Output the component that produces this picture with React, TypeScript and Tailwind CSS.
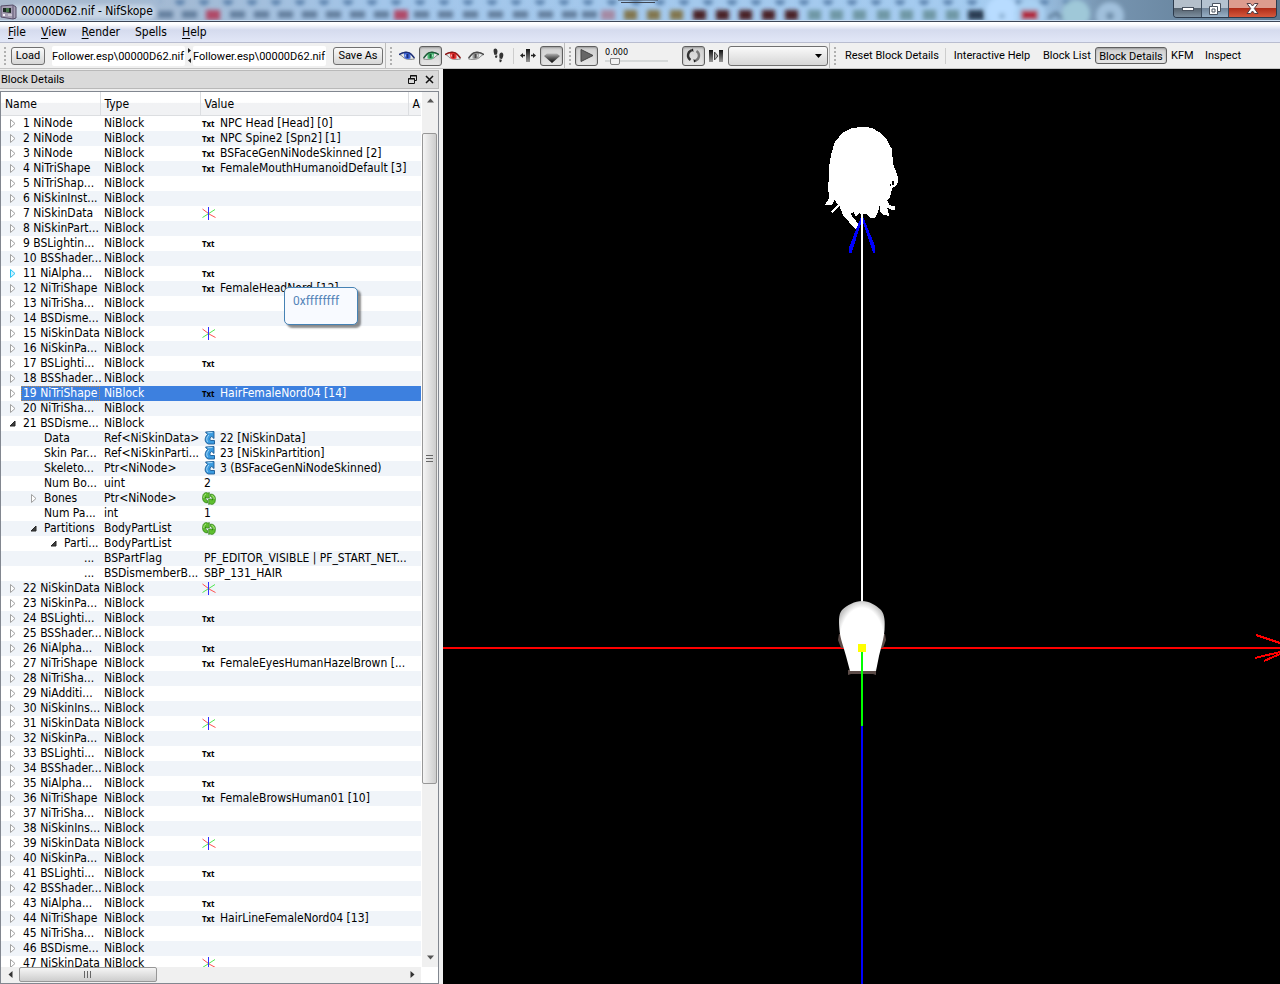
import React from 'react';

type ValueIcon = 'text' | 'axes' | 'link' | 'array';

interface TreeRow {
    name: string;
    type: string;
    level: number;
    state?: 'open' | 'closed' | 'hover';
    icon?: ValueIcon;
    value?: string;
    selected?: boolean;
}

const block = (name: string, icon?: ValueIcon, value?: string): TreeRow => ({
    name,
    type: 'NiBlock',
    level: 0,
    state: 'closed',
    icon,
    value
});

const rows: TreeRow[] = [
    block('1 NiNode', 'text', 'NPC Head [Head] [0]'),
    block('2 NiNode', 'text', 'NPC Spine2 [Spn2] [1]'),
    block('3 NiNode', 'text', 'BSFaceGenNiNodeSkinned [2]'),
    block('4 NiTriShape', 'text', 'FemaleMouthHumanoidDefault [3]'),
    block('5 NiTriShap...'),
    block('6 NiSkinInst...'),
    block('7 NiSkinData', 'axes'),
    block('8 NiSkinPart...'),
    block('9 BSLightin...', 'text'),
    block('10 BSShader...'),
    { ...block('11 NiAlpha...', 'text'), state: 'hover' },
    block('12 NiTriShape', 'text', 'FemaleHeadNord [12]'),
    block('13 NiTriSha...'),
    block('14 BSDisme...'),
    block('15 NiSkinData', 'axes'),
    block('16 NiSkinPa...'),
    block('17 BSLighti...', 'text'),
    block('18 BSShader...'),
    { ...block('19 NiTriShape', 'text', 'HairFemaleNord04 [14]'), selected: true },
    block('20 NiTriSha...'),
    { ...block('21 BSDisme...'), state: 'open' },
    { name: 'Data', type: 'Ref<NiSkinData>', level: 1, icon: 'link', value: '22 [NiSkinData]' },
    { name: 'Skin Par...', type: 'Ref<NiSkinParti...', level: 1, icon: 'link', value: '23 [NiSkinPartition]' },
    { name: 'Skeleto...', type: 'Ptr<NiNode>', level: 1, icon: 'link', value: '3 (BSFaceGenNiNodeSkinned)' },
    { name: 'Num Bo...', type: 'uint', level: 1, value: '2' },
    { name: 'Bones', type: 'Ptr<NiNode>', level: 1, state: 'closed', icon: 'array' },
    { name: 'Num Pa...', type: 'int', level: 1, value: '1' },
    { name: 'Partitions', type: 'BodyPartList', level: 1, state: 'open', icon: 'array' },
    { name: 'Parti...', type: 'BodyPartList', level: 2, state: 'open' },
    { name: '...', type: 'BSPartFlag', level: 3, value: 'PF_EDITOR_VISIBLE | PF_START_NET...' },
    { name: '...', type: 'BSDismemberB...', level: 3, value: 'SBP_131_HAIR' },
    block('22 NiSkinData', 'axes'),
    block('23 NiSkinPa...'),
    block('24 BSLighti...', 'text'),
    block('25 BSShader...'),
    block('26 NiAlpha...', 'text'),
    block('27 NiTriShape', 'text', 'FemaleEyesHumanHazelBrown [...'),
    block('28 NiTriSha...'),
    block('29 NiAdditi...'),
    block('30 NiSkinIns...'),
    block('31 NiSkinData', 'axes'),
    block('32 NiSkinPa...'),
    block('33 BSLighti...', 'text'),
    block('34 BSShader...'),
    block('35 NiAlpha...', 'text'),
    block('36 NiTriShape', 'text', 'FemaleBrowsHuman01 [10]'),
    block('37 NiTriSha...'),
    block('38 NiSkinIns...'),
    block('39 NiSkinData', 'axes'),
    block('40 NiSkinPa...'),
    block('41 BSLighti...', 'text'),
    block('42 BSShader...'),
    block('43 NiAlpha...', 'text'),
    block('44 NiTriShape', 'text', 'HairLineFemaleNord04 [13]'),
    block('45 NiTriSha...'),
    block('46 BSDisme...'),
    block('47 NiSkinData', 'axes')
];

const indents = ['pl-[5px]', 'pl-[26px]', 'pl-[46px]', 'pl-[66px]'];

const pressed = 'border border-[#5f5f5f] rounded-[3px] bg-linear-to-b from-[#cfcfcf] to-[#e6e6e6] shadow-[inset_0_1px_2px_#9a9a9a]';
const raised = 'border border-[#707070] rounded-[3px] bg-linear-to-b from-[#fafafa] to-[#d6d6d6]';

/* Title bar */

// x, width, colour of the blurred things behind the glass
const glassSpots: [number, number, string][] = [
    [206, 14, '#b04a68'],
    [394, 14, '#b04a68'],
    [601, 14, '#a58aa4'],
    [624, 13, '#82774f'],
    [647, 13, '#82774f'],
    [670, 13, '#82774f'],
    [693, 13, '#4a2028'],
    [716, 13, '#4a2028'],
    [739, 13, '#4a2028'],
    [762, 13, '#4a2028'],
    [785, 13, '#4a2028'],
    [808, 13, '#6f98a6'],
    [830, 13, '#6f98a6'],
    [853, 13, '#6f98a6'],
    [877, 13, '#6f98a6'],
    [900, 13, '#6f98a6'],
    [923, 13, '#6f98a6'],
    [946, 13, '#6f98a6'],
    [968, 16, '#2b3d52']
];

const glassDashes = [158, 182, 230, 254, 278, 302, 326, 350, 374, 414, 438, 463, 488, 513, 538, 562, 582];

const TitleBar: React.FC = () => (
    <header className="relative h-[22px] shrink-0 overflow-hidden border-b border-[#3c4656] bg-[#9fc0e0]">
        <svg className="absolute inset-0 h-full w-full" viewBox="0 0 1280 21" preserveAspectRatio="none">
            <defs>
                <filter id="glass" x="-5%" y="-50%" width="110%" height="200%">
                    <feGaussianBlur stdDeviation="2.2" />
                </filter>
                <pattern id="dots" width="24" height="12" patternUnits="userSpaceOnUse">
                    <ellipse cx="12" cy="1" rx="5" ry="4" fill="#547da8" />
                </pattern>
                <linearGradient id="glassBase">
                    <stop offset="0" stopColor="#a9b8cc" />
                    <stop offset="0.14" stopColor="#a3bad4" />
                    <stop offset="0.3" stopColor="#a3c6ea" />
                    <stop offset="0.8" stopColor="#a5ccf0" />
                    <stop offset="0.86" stopColor="#7795b1" />
                    <stop offset="1" stopColor="#5c7890" />
                </linearGradient>
            </defs>
            <rect width="1280" height="21" fill="url(#glassBase)" />
            <g filter="url(#glass)">
                <rect x="160" width="920" height="7" fill="url(#dots)" />
                {glassDashes.map((x) => (
                    <rect key={x} x={x} y="11" width="15" height="7" fill="#647f9e" />
                ))}
                {glassSpots.map(([x, width, fill]) => (
                    <rect key={x} x={x} y="10" width={width} height="10" fill={fill} />
                ))}
                <circle cx="1002" cy="12" r="16" fill="#b8dcff" />
                <circle cx="1002" cy="16" r="3" fill="#8fb2d4" />
                <circle cx="1030" cy="14" r="15" fill="#a9d0f2" />
                <circle cx="1076" cy="14" r="14" fill="#9fc8d8" />
                <circle cx="1110" cy="16" r="14" fill="#a0c0dc" />
                <circle cx="1110" cy="16" r="4" fill="#6f8fab" />
                <path d="M1048 18l8-5 6 5" stroke="#5a7894" strokeWidth="3" fill="none" />
                <rect x="1021" y="10" width="17" height="10" fill="#b02a40" />
                <rect x="10" y="5" width="145" height="14" rx="6" fill="#dbe6f2" fillOpacity="0.65" />
            </g>
            <path d="M618 0h40M621 2.500h34" stroke="#3f4652" strokeWidth="1" />
            <path d="M0 20.500h1280" stroke="#c9dcee" />
        </svg>
        <div className="relative flex h-full items-center justify-between">
            <div className="flex items-center gap-1">
                <svg width="17" height="18" viewBox="0 0 17 18">
                    <path d="M1 4l12-1 3 2v11l-3 1-12-2z" fill="#a69fb4" stroke="#544c66" />
                    <path d="M13 3v14" stroke="#5d5470" />
                    <path d="M3 6h8v5l-8-1z" fill="#1d2a25" />
                    <path d="M6 6h3v4h-3z" fill="#47774b" />
                    <path d="M3 12h2v2h-2z" fill="#f4f2f8" />
                    <path d="M8 13h4" stroke="#eee" />
                </svg>
                <h1 className="text-[12px] text-black">00000D62.nif - NifSkope</h1>
            </div>
            <div className="mr-[3px] flex h-[18px] self-start overflow-hidden rounded-b-[4px] border border-t-0 border-[#2c3a4c]">
                <button aria-label="Minimize" className="flex w-7 items-center justify-center border-r border-[#3d4c5e] bg-linear-to-b from-[#b4bfca] from-45% via-[#56636f] via-50% to-[#7d8f9f]">
                    <svg width="12" height="6" viewBox="0 0 12 6"><rect x="0.5" y="1.5" width="11" height="3" fill="#fff" stroke="#49525f" /></svg>
                </button>
                <button aria-label="Restore" className="flex w-[27px] items-center justify-center border-r border-[#3d4c5e] bg-linear-to-b from-[#b4c2d0] from-45% via-[#71859a] via-50% to-[#98b0c6]">
                    <svg width="12" height="12" viewBox="0 0 12 12">
                        <path d="M3.5 0.5h8v8h-3v3h-8v-8h3z" fill="#fff" stroke="#49525f" />
                        <path d="M3.5 3.5h5v5M3 6h3v3h-3z" fill="none" stroke="#49525f" />
                    </svg>
                </button>
                <button aria-label="Close" className="flex w-[47px] items-center justify-center bg-linear-to-b from-[#dd9c8e] from-45% via-[#b02c18] via-50% to-[#d5583c]">
                    <svg width="13" height="11" viewBox="0 0 13 11">
                        <path d="M1 0.5h3.5l2 2.5 2-2.5h3.5l-3.7 5 3.7 5h-3.5l-2-2.5-2 2.5h-3.5l3.7-5z" fill="#fff" stroke="#4f3d44" />
                    </svg>
                </button>
            </div>
        </div>
    </header>
);

const menus = [
    { key: 'F', rest: 'ile' },
    { key: 'V', rest: 'iew' },
    { key: 'R', rest: 'ender' },
    { key: '', rest: 'Spells' },
    { key: 'H', rest: 'elp' }
];

const MenuBar: React.FC = () => (
    <nav className="flex h-[21px] shrink-0 items-center gap-[15px] border-b border-[#b9bdd0] bg-linear-to-b from-white from-10% via-[#d5dbee] via-40% to-[#e2e7f7] pl-2 text-[12px]">
        {menus.map((menu) => (
            <button key={menu.rest}>
                <span className="underline underline-offset-2">{menu.key}</span>
                {menu.rest}
            </button>
        ))}
    </nav>
);

/* Toolbar */

const Grip: React.FC = () => (
    <svg className="shrink-0" width="3" height="19" viewBox="0 0 3 19">
        <path d="M1 1v18" stroke="#b0b0b0" strokeWidth="2" strokeDasharray="2 2" />
    </svg>
);

const Eye: React.FC<{ color: string; dark: string; flip?: boolean }> = ({ color, dark, flip }) => (
    <svg width="16" height="10" viewBox="0 0 16 10" className={flip ? '-scale-x-100' : undefined}>
        <path d="M0.500 3.500C4 0.500 10 0.500 12.500 4L15.500 8C11 9 5 8.500 3 5z" fill="#e4e8e8" stroke="#777" strokeWidth="0.800" />
        <path d="M5 2h6.500v5.500L8 8.300 5.500 7z" fill={color} />
        <path d="M8.500 3v4" stroke={dark} strokeWidth="1.800" />
        <path d="M6.500 3.500v2" stroke="#fff" strokeOpacity="0.600" />
        <path d="M0 3.700C4 0.800 10 0 12.500 3.500L15.500 7" fill="none" stroke={dark} strokeWidth="1.400" />
    </svg>
);

const ToolBar: React.FC = () => (
    <div className="flex h-[26px] shrink-0 items-stretch overflow-hidden border-b border-[#c4c4c4] bg-[#f0f0f0] font-[Roboto,sans-serif] text-[11px] whitespace-nowrap">
        <div className="flex w-[386px] shrink-0 items-center border-r border-[#bdbdbd] pl-1">
            <Grip />
            <button className={`ml-1 h-[18px] w-[34px] ${raised}`}>Load</button>
            <input aria-label="Load file" className="ml-[7px] h-5 w-[133px] rounded-[2px] bg-white pt-0.5" defaultValue="Follower.esp\00000D62.nif" />
            <svg className="ml-0.5 shrink-0" width="5" height="15" viewBox="0 0 5 15">
                <path d="M1 0l3 2.500-3 2.500zM4 10v5l-3-2.500z" fill="#222" />
            </svg>
            <input aria-label="Save file" className="ml-px h-5 w-[133px] rounded-[2px] bg-white pt-0.5" defaultValue="Follower.esp\00000D62.nif" />
            <button className={`ml-[7px] h-[18px] w-[50px] ${raised}`}>Save As</button>
        </div>

        <div className="flex w-[179px] shrink-0 items-center border-r border-[#bdbdbd] pl-1">
            <Grip />
            <button aria-label="View top" className="ml-1.5"><Eye color="#3c64d8" dark="#1c2f78" /></button>
            <button aria-label="View front" className={`ml-1 flex h-5 w-[23px] items-center justify-center ${pressed}`}>
                <Eye color="#45b870" dark="#1d5a38" flip />
            </button>
            <button aria-label="View side" className="ml-[3px]"><Eye color="#ec3030" dark="#8f1616" /></button>
            <button aria-label="View user" className="ml-[7px]"><Eye color="#999" dark="#4a4a4a" flip /></button>
            <button aria-label="Walk" className="ml-[9px]">
                <svg width="11" height="15" viewBox="0 0 11 15" fill="#333">
                    <path d="M1 1c1.500-1.500 3.500 0 3.500 2.500L4 6.500 1.500 7C1 5 0 2.500 1 1zM2 7.700l2.200-.4c.3 1.500 0 2.500-1 2.600s-1.200-1-1.200-2.200zM10 5.500C9 3.500 6.500 4.500 6.300 7l.2 3.500 2.500.5C10 9 10.800 7 10 5.500zM6.500 11.300l2.300.5c0 1.500-.6 2.600-1.500 2.500s-1-1.500-.8-3z" />
                </svg>
            </button>
            <div className="ml-[9px] h-4 w-px bg-[#cdcdcd]" />
            <button aria-label="Flip" className="ml-1.5">
                <svg width="16" height="13" viewBox="0 0 16 13">
                    <defs>
                        <linearGradient id="bar" x2="0" y2="1"><stop stopColor="#111" /><stop offset="1" stopColor="#999" /></linearGradient>
                    </defs>
                    <rect x="6" width="4" height="13" fill="url(#bar)" />
                    <path d="M0 6.500l3-2.500v1.800h2v1.400H3V9zM16 6.500L13 4v1.800h-2v1.400h2V9z" fill="#222" />
                </svg>
            </button>
            <button aria-label="Perspective" className={`ml-1 flex h-5 w-[23px] items-center justify-center pt-1 ${pressed}`}>
                <svg width="16" height="11" viewBox="0 0 16 11">
                    <defs>
                        <linearGradient id="plane" x2="0" y2="1"><stop stopColor="#b5b5b5" /><stop offset="0.400" stopColor="#666" /><stop offset="1" stopColor="#050505" /></linearGradient>
                    </defs>
                    <path d="M0 4l3-2.500h10l3 2.500-8 7z" fill="url(#plane)" />
                </svg>
            </button>
        </div>

        <div className="flex w-[265px] shrink-0 items-center border-r border-[#bdbdbd] pl-1">
            <Grip />
            <button aria-label="Play" className={`ml-[3px] flex h-5 w-[23px] items-center justify-center ${pressed}`}>
                <svg width="14" height="13" viewBox="0 0 14 13"><path d="M1 0.500l12 6-12 6z" fill="#666" stroke="#444" /></svg>
            </button>
            <label className="ml-[7px] flex h-full w-[63px] flex-col pt-1 font-['DejaVu_Sans_Condensed',sans-serif] text-[9px] leading-[10px]">
                0.000
                <input
                    type="range"
                    min="0"
                    max="100"
                    defaultValue="10"
                    className="h-2 w-full appearance-none bg-linear-to-b from-transparent from-35% via-[#c3c8c8] via-50% to-transparent to-65% [&::-webkit-slider-thumb]:h-[7px] [&::-webkit-slider-thumb]:w-[10px] [&::-webkit-slider-thumb]:appearance-none [&::-webkit-slider-thumb]:rounded-b-[2px] [&::-webkit-slider-thumb]:border [&::-webkit-slider-thumb]:border-[#858585] [&::-webkit-slider-thumb]:bg-[#f2f2f2]"
                />
            </label>
            <button aria-label="Loop" className={`ml-[14px] flex h-5 w-[23px] items-center justify-center ${pressed}`}>
                <svg width="15" height="15" viewBox="0 0 15 15" fill="none" stroke="#333" strokeWidth="2.400">
                    <path d="M5.500 2.400A5.400 5.400 0 0 0 4.500 12" />
                    <path d="M9.500 12.600A5.400 5.400 0 0 0 10.500 3" stroke="#777" />
                    <path d="M7 0.500L7.500 4 4.500 2zM8 14.500L7.500 11l3 2z" fill="#222" stroke="none" />
                </svg>
            </button>
            <button aria-label="Next sequence" className="ml-1">
                <svg width="14" height="12" viewBox="0 0 14 12">
                    <path d="M0 0h4v12H0zM10 0h4v12h-4z" fill="url(#bar)" />
                    <path d="M5.500 2l3.500 4-3.500 4z" fill="#aaa" stroke="#444" />
                </svg>
            </button>
            <div className="relative ml-[5px] flex items-center">
                <select aria-label="Animation" className={`h-5 w-[100px] appearance-none ${raised}`} />
                <svg className="pointer-events-none absolute right-1.5" width="7" height="4" viewBox="0 0 7 4"><path d="M0 0h7L3.500 4z" /></svg>
            </div>
        </div>

        <div className="flex grow items-center pl-1">
            <Grip />
            <button className="ml-2 w-[92px] pt-0.5">Reset Block Details</button>
            <div className="ml-[8px] h-4 w-px bg-[#cdcdcd]" />
            <button className="ml-[7px] w-[78px] pt-0.5">Interactive Help</button>
            <button className="ml-3 w-[44px] pt-0.5">Block List</button>
            <button className={`ml-2 h-[17px] w-[72px] pt-px ${pressed}`}>Block Details</button>
            <button className="ml-1 w-[22px] pt-0.5">KFM</button>
            <button className="ml-[11px] w-[38px] pt-0.5">Inspect</button>
        </div>
    </div>
);

/* Block tree */

const Expander: React.FC<{ state?: TreeRow['state'] }> = ({ state }) => {
    if (!state) return <span className="w-[13px] shrink-0" />;

    return (
        <button aria-label="Toggle branch" className="flex w-[13px] shrink-0 items-center justify-center">
            <svg width="9" height="9" viewBox="0 0 9 9">
                {state === 'open' ? (
                    <path d="M7 2v5H2z" fill="#404040" stroke="#262626" strokeLinejoin="round" />
                ) : (
                    <path
                        d="M2.500 0.500v8l4.500-4z"
                        fill={state === 'hover' ? '#cdf1fd' : '#fff'}
                        stroke={state === 'hover' ? '#27c4f5' : '#a0a0a0'}
                    />
                )}
            </svg>
        </button>
    );
};

const RowIcon: React.FC<{ icon: ValueIcon }> = ({ icon }) => {
    switch (icon) {
        case 'text':
            return <span className="w-[18px] shrink-0 font-['Noto_Sans',sans-serif] text-[8px] leading-[13px] font-bold text-black">Txt</span>;
        case 'axes':
            return (
                <svg className="shrink-0" width="14" height="15" viewBox="0 0 14 15" fill="none">
                    <path d="M0.500 3l6 4.500M13.500 11.500L7 8" stroke="#ff5050" />
                    <path d="M0.500 11.500L13 3.500" stroke="#50e850" />
                    <path d="M6.500 1v13" stroke="#3030ff" />
                </svg>
            );
        case 'link':
            return (
                <svg className="mr-1 ml-0.5 shrink-0" width="12" height="14" viewBox="0 0 12 14">
                    <path d="M1.500 1L10 0.500V7.500L7.800 5.500C6 6 5.500 8 6.500 9.500H10.500V13H4.500C0.500 12 0 7 3.500 3.500z" fill="#3b9be0" stroke="#1b5a94" strokeWidth="0.900" />
                    <path d="M3.500 1.800l5-.3M5 4C2.500 6.500 2 9 4 11" fill="none" stroke="#a9dcfa" />
                </svg>
            );
        default:
            return (
                <svg className="shrink-0" width="14" height="13" viewBox="0 0 14 13">
                    <path d="M2 1.500C3.500 0.200 5 0.500 6 1.200L7.300 0.500V6H3L4 4.700C3 5 3 6.800 4 7.500L5.500 8.500V11C2.500 11 0.500 9 0.600 6S1.200 2.200 2 1.500z" fill="#5fbf30" stroke="#2c7c14" strokeWidth="0.700" />
                    <path d="M12 11.500C10.500 12.800 9 12.500 8 11.800L6.700 12.500V7H11L10 8.300C11 8 11 6.200 10 5.500L8.500 4.500V2C11.500 2 13.500 4 13.400 7S12.800 10.800 12 11.500z" fill="#5fbf30" stroke="#2c7c14" strokeWidth="0.700" />
                    <path d="M1.800 6C1.800 4 2.500 2.500 4 2M9.500 3.300C11.500 4 12.300 5.500 12.200 7" stroke="#b6eb8e" fill="none" strokeWidth="0.900" />
                </svg>
            );
    }
};

const scrollThumb = 'flex items-center justify-center rounded-[2px] border border-[#979797]';

const BlockTree: React.FC = () => (
    <div className="flex min-h-0 grow flex-col border border-[#828790] bg-white">
        <div className="flex min-h-0 grow">
            <div className="mr-px h-full min-w-0 grow overflow-hidden">
                <table className="w-full table-fixed border-collapse text-left font-['DejaVu_Sans_Condensed','DejaVu_Sans',sans-serif] text-[12px] whitespace-nowrap">
                    <colgroup>
                        <col className="w-[99px]" />
                        <col className="w-[100px]" />
                        <col className="w-[208px]" />
                        <col />
                    </colgroup>
                    <thead>
                        <tr className="h-[23px] bg-linear-to-b from-white from-45% to-[#f1f2f4] to-50%">
                            {['Name', 'Type', 'Value', 'A'].map((title) => (
                                <th key={title} className="border-r border-b border-[#dcdee1] p-0 pt-px pl-1 font-normal last:border-r-0">
                                    {title}
                                </th>
                            ))}
                        </tr>
                    </thead>
                    <tbody className="leading-[15px]">
                        {rows.map((row, idx) => (
                            <tr key={idx} className={row.selected ? 'bg-[#3d80df] text-white' : idx % 2 ? 'bg-[#f0f4f9]' : 'bg-white'}>
                                <td className="p-0">
                                    <div className={`flex h-[15px] ${row.selected ? 'bg-white' : ''} ${indents[row.level]}`}>
                                        <Expander state={row.state} />
                                        <span className={`grow ${row.selected ? 'ml-0.5 border border-dotted border-[#c08a4a] bg-[#3d80df] pl-px leading-[13px]' : 'pl-1'}`}>
                                            {row.name}
                                        </span>
                                    </div>
                                </td>
                                <td className="p-0 pl-1">{row.type}</td>
                                <td className="p-0 pl-0.5">
                                    <div className="flex h-[15px] items-center">
                                        {row.icon && <RowIcon icon={row.icon} />}
                                        <span className={row.icon ? '' : 'pl-0.5'}>{row.value}</span>
                                    </div>
                                </td>
                                <td className="p-0" />
                            </tr>
                        ))}
                    </tbody>
                </table>
            </div>
            <div className="flex w-4 shrink-0 flex-col bg-[#f0f0f0]">
                <button aria-label="Scroll up" className="flex h-[41px] shrink-0 justify-center pt-1.5">
                    <svg width="7" height="5" viewBox="0 0 7 5"><path d="M3.500 0.500L7 4.500H0z" fill="#555" /></svg>
                </button>
                <div className={`mr-px h-[651px] ${scrollThumb} bg-linear-to-r from-[#f5f5f5] to-[#cdcdcd]`}>
                    <svg width="7" height="8" viewBox="0 0 7 8"><path d="M0 0.500h7M0 3.500h7M0 6.500h7" stroke="#666" /></svg>
                </div>
                <button aria-label="Scroll down" className="mt-auto flex h-3 shrink-0 justify-center">
                    <svg width="7" height="5" viewBox="0 0 7 5"><path d="M3.500 4.500L7 0.500H0z" fill="#555" /></svg>
                </button>
            </div>
        </div>
        <div className="mr-[17px] flex h-4 shrink-0 items-start bg-[#f0f0f0]">
            <button aria-label="Scroll left" className="flex h-[15px] w-[18px] items-center justify-center">
                <svg width="5" height="7" viewBox="0 0 5 7"><path d="M4.500 0v7L0.500 3.500z" fill="#333" /></svg>
            </button>
            <div className={`h-[15px] w-[138px] ${scrollThumb} bg-linear-to-b from-[#f5f5f5] to-[#cdcdcd]`}>
                <svg width="8" height="7" viewBox="0 0 8 7"><path d="M0.500 0v7M3.500 0v7M6.500 0v7" stroke="#666" /></svg>
            </div>
            <button aria-label="Scroll right" className="ml-auto flex h-[15px] w-[18px] items-center justify-center">
                <svg width="5" height="7" viewBox="0 0 5 7"><path d="M0.500 0v7L4.500 3.500z" fill="#333" /></svg>
            </button>
        </div>
    </div>
);

const BlockDetails: React.FC = () => (
    <section className="flex w-[443px] shrink-0 flex-col bg-[#f0f0f0] pt-px pr-1">
        <div className="mb-[2px] flex h-[19px] shrink-0 items-center border border-l-0 border-[#b9b9b9] bg-[#dadada] pl-px font-[Roboto,sans-serif] text-[11px]">
            <h2 className="grow pt-0.5">Block Details</h2>
            <button aria-label="Float" className="mr-2">
                <svg width="9" height="9" viewBox="0 0 9 9" fill="none" stroke="#111">
                    <path d="M2.500 3V0.500h6v5H6.500M2 1h7M0.500 3.500h6v5h-6zM0 4h7" />
                </svg>
            </button>
            <button aria-label="Close panel" className="mr-1">
                <svg width="9" height="9" viewBox="0 0 9 9"><path d="M1 1l7 7M8 1L1 8" stroke="#111" strokeWidth="1.500" /></svg>
            </button>
        </div>
        <BlockTree />
    </section>
);

/* 3D view */

const Viewport: React.FC = () => (
    <main className="min-w-0 grow bg-black">
        <svg className="h-full w-full" viewBox="443 69 837 915" preserveAspectRatio="xMidYMin slice">
            <defs>
                <radialGradient id="skull" cx="0.5" cy="0.58" r="0.6">
                    <stop offset="0.8" stopColor="#fff" />
                    <stop offset="1" stopColor="#c4c4c4" />
                </radialGradient>
            </defs>
            {/* x axis */}
            <path d="M443 648h837" stroke="#f00" strokeWidth="2" />
            <path d="M1256 635l24 8M1255 658l25-6M1264 661l16-7" stroke="#f00" strokeWidth="2" shapeRendering="crispEdges" />
            {/* hair */}
            <g transform="translate(810 110) scale(0.3333)" shapeRendering="crispEdges">
                <path
                    d="M125 55L150 51 185 53 210 68 230 88 246 118 249 160 258 185 266 210 260 226 247 234 242 250 241 262 232 272 238 285 257 290 253 300 240 298 231 292 238 318 220 314 210 305 208 282 205 305 194 325 182 324 170 312 160 312 147 310 137 320 131 306 121 312 145 342 147 358 136 358 116 335 100 318 92 297 88 288 76 300 65 311 64 303 84 285 74 270 66 285 46 284 58 262 54 235 57 200 57 170 64 130 75 95 98 68z"
                    fill="#fff"
                />
                <path d="M247 214h4v10h-5zM240 222h4v6h-4z" fill="#000" />
                <path d="M154 318L118 410v20h6L155 335M158 318L196 410v20h-6L158 335" fill="#00f" />
            </g>
            <path d="M862 214v390" stroke="#fff" strokeWidth="2" />
            {/* head */}
            <path d="M841 634h-2l-1 6 3 8h6v-14zM883 634h2l1 6-3 8h-6v-14zM848 670h28v5l-3-1h-22l-3 1z" fill="#5c4c48" />
            <path
                d="M862 601C869 601 876 605 881 610C885 615 885 622 884.500 630C884 638 881 648 879 656L876 671H850L846 656C844 648 840 638 839.500 630C839 622 838 615 842 610C847 605 855 601 862 601z"
                fill="url(#skull)"
            />
            {/* y and z axes */}
            <path d="M862 652v74" stroke="#0f0" strokeWidth="2" />
            <path d="M862 726v258" stroke="#00f" strokeWidth="2" />
            <rect x="858" y="644" width="8" height="8" fill="#ff0" />
        </svg>
    </main>
);

export default function App() {
    return (
        <div className="relative flex h-screen flex-col overflow-hidden bg-[#f0f0f0] font-['DejaVu_Sans_Condensed','DejaVu_Sans',sans-serif] text-black">
            <TitleBar />
            <MenuBar />
            <ToolBar />
            <div className="flex min-h-0 grow">
                <BlockDetails />
                <Viewport />
            </div>
            <div
                role="tooltip"
                className="absolute top-[287px] left-[284px] h-[38px] w-[74px] rounded-[5px] border border-[#4682b4] bg-[#f8faff] pt-1.5 pl-2 font-[Roboto,sans-serif] text-[12px] leading-[14px] text-[#5584b8] shadow-[3px_3px_2px_#00000070]"
            >
                0xffffffff
            </div>
        </div>
    );
}
